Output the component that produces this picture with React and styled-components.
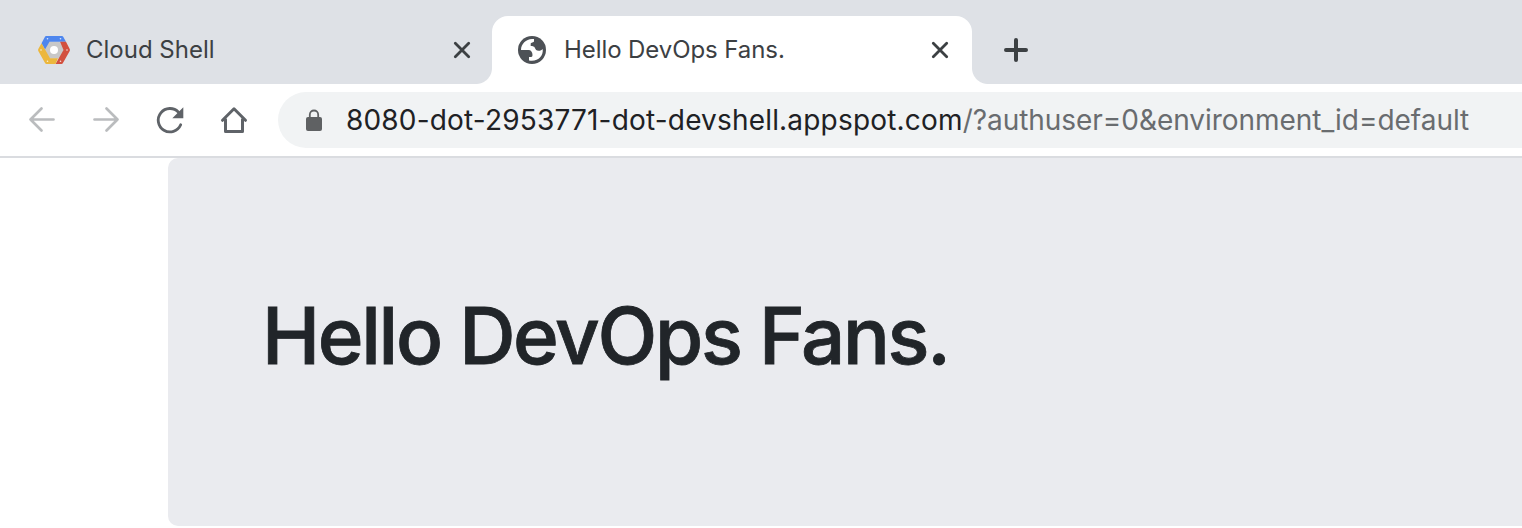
import React from "react";
import styled, { createGlobalStyle } from "styled-components";

const Global = createGlobalStyle`
  * { box-sizing: border-box; }
  body { margin: 0; background: #fff; font-family: Inter, "Liberation Sans", sans-serif; overflow: hidden; }
`;

const Browser = styled.div`
  width: 100%;
  height: 528px;
  overflow: hidden;
  display: flex;
  flex-direction: column;
`;

const TabStrip = styled.div`
  display: flex;
  height: 84px;
  flex: none;
  padding-top: 16px;
  background: #dee1e6;
`;

const Tab = styled.div`
  display: flex;
  align-items: center;
  width: ${(p) => (p.$active ? 480 : 492)}px;
  height: 68px;
  padding: 0 ${(p) => (p.$active ? 22 : 20)}px 0 ${(p) => (p.$active ? 26 : 38)}px;
  background: ${(p) => (p.$active ? "#fff" : "transparent")};
  border-radius: 16px 16px 0 0;
  position: relative;
  &::before, &::after {
    content: "";
    display: ${(p) => (p.$active ? "block" : "none")};
    position: absolute;
    bottom: 0;
    width: 16px;
    height: 16px;
  }
  &::before { left: -16px; background: radial-gradient(circle at 0 0, transparent 15.5px, #fff 16.5px); }
  &::after { right: -16px; background: radial-gradient(circle at 100% 0, transparent 15.5px, #fff 16.5px); }
`;

const TabTitle = styled.span`
  flex: 1;
  margin-left: ${(p) => p.$gap}px;
  font-size: 24px;
  line-height: 32px;
  letter-spacing: ${(p) => p.$track}px;
  color: #3c4043;
  white-space: nowrap;
`;

const Icon = styled.svg`
  display: block;
  flex: none;
  overflow: visible;
`;

const NewTab = styled.div`
  display: flex;
  align-items: center;
  margin-left: 32px;
`;

const Toolbar = styled.div`
  display: flex;
  align-items: center;
  height: 74px;
  flex: none;
  padding: 8px 0 8px 26px;
  border-bottom: 2px solid #dadce0;
`;

const NavButtons = styled.div`
  display: flex;
  gap: 32px;
  width: 252px;
`;

const AddressBar = styled.div`
  display: flex;
  align-items: center;
  flex: 1;
  height: 56px;
  padding-left: 27px;
  background: #f1f3f4;
  border-radius: 28px 0 0 28px;
`;

const Url = styled.span`
  margin-left: 23px;
  font-size: 28px;
  line-height: 36px;
  letter-spacing: 0.18px;
  white-space: nowrap;
  color: #202124;
`;

const Query = styled.span`
  color: #696c6f;
  letter-spacing: -0.04px;
`;

const Page = styled.main`
  flex: 1;
  padding-left: 168px;
`;

const Jumbotron = styled.section`
  display: flex;
  height: 368px;
  padding: 126px 94px;
  background: #eaebef;
  border-radius: 10px 0 0 10px;
`;

const Heading = styled.h1`
  margin: 0;
  font-size: 78px;
  font-weight: 500;
  line-height: 104px;
  letter-spacing: -2.33px;
  white-space: nowrap;
  color: #212529;
  -webkit-text-stroke: 0.8px #212529;
`;

const Close = () => (
  <Icon width="20" height="20" viewBox="0 0 20 20" stroke="#3c4043" strokeWidth="2.8" strokeLinecap="round">
    <path d="M3.3 3.3 16.7 16.7M16.7 3.3 3.3 16.7" />
  </Icon>
);

const CloudLogo = () => (
  <Icon width="32" height="28" viewBox="0 0 32 28">
    <path d="M10.500 5.700h11l4.700 8.300-4.700 8.300h-11L5.800 14z" fill="#c8c8c8" />
    <path d="M8 0h16q.8 0 1.200.7L28 5.700H11.500L7 13.500 3.500 7.300 7 .7Q7.400 0 8 0z" fill="#4e86ee" />
    <path d="M22 5.700h6l3.700 7.300q.5 1 0 2l-6.900 12.300q-.4.700-1.200.7H17.500l8-14z" fill="#d2503f" />
    <path d="M3.500 7.300 12 22.300h8L17.500 28H8.400q-.8 0-1.200-.7L.3 15q-.5-1 0-2z" fill="#ecb73d" />
    <circle cx="16" cy="14" r="4" fill="#fff" />
    <g fill="#fff" opacity=".8">
      <circle cx="9.500" cy="2.800" r=".8" /><circle cx="22.500" cy="2.800" r=".8" />
      <circle cx="3" cy="14" r=".8" /><circle cx="29" cy="14" r=".8" />
      <circle cx="9.500" cy="25.300" r=".8" /><circle cx="22.500" cy="25.300" r=".8" />
    </g>
  </Icon>
);

const Globe = () => (
  <Icon width="28" height="28" viewBox="0 0 28 28">
    <circle cx="14" cy="14" r="14" fill="#4d5156" />
    <path fill="#fff" d="M3 14C3 8 8 3 14 3h2v2.300c0 1.500-3.300 1-3.300 2.400V10c2 0 3.500.5 4 1.500.7 2 1.800 3.300 4 3.300 1.700 0 3-.8 4-1.800C25.700 20 19.500 26.300 11 24.500V21h2.200c.8 0 1.300-.9 1.300-2 0-3-1.500-5-4-5z" />
  </Icon>
);

export default function App() {
  return (
    <Browser>
      <Global />
      <TabStrip>
        <Tab><CloudLogo /><TabTitle $gap={16} $track={0}>Cloud Shell</TabTitle><Close /></Tab>
        <Tab $active><Globe /><TabTitle $gap={18} $track={-0.08}>Hello DevOps Fans.</TabTitle><Close /></Tab>
        <NewTab>
          <Icon width="24" height="24" viewBox="0 0 24 24" stroke="#3c4043" strokeWidth="4" strokeLinecap="round">
            <path d="M12 2v20M2 12h20" />
          </Icon>
        </NewTab>
      </TabStrip>
      <Toolbar>
        <NavButtons>
          <Icon width="32" height="32" viewBox="0 0 32 32" fill="none" stroke="#babcbe" strokeWidth="2.700" strokeLinecap="round" strokeLinejoin="round">
            <path d="M27.500 15.500H4.500M15.500 4.500l-11 11 11 11" />
          </Icon>
          <Icon width="32" height="32" viewBox="0 0 32 32" fill="none" stroke="#babcbe" strokeWidth="2.700" strokeLinecap="round" strokeLinejoin="round">
            <path d="M4.500 15.500h23M16.500 4.500l11 11-11 11" />
          </Icon>
          <Icon width="32" height="32" viewBox="0 0 32 32" fill="none" stroke="#5f6368" strokeWidth="2.800" strokeLinecap="round">
            <path d="M26.700 20.800A11.700 11.700 0 1 1 24.500 8.200" />
            <path d="M29.300 3.300v11H18.300z" fill="#5f6368" stroke="none" />
          </Icon>
          <Icon width="32" height="32" viewBox="0 0 32 32" fill="none" stroke="#5f6368" strokeWidth="3" strokeLinecap="round" strokeLinejoin="round">
            <path d="M4.500 16.300 16 4.800 27.500 16.300M7.500 15.500v12h17v-12" />
          </Icon>
        </NavButtons>
        <AddressBar>
          <Icon width="18" height="22" viewBox="0 0 18 22">
            <rect x="1" y="8" width="16" height="14" rx="2" fill="#5f6163" />
            <path d="M4.800 9.500V5.700a4.200 4.200 0 0 1 8.400 0v3.800" fill="none" stroke="#5f6163" strokeWidth="1.800" />
          </Icon>
          <Url>8080-dot-2953771-dot-devshell.appspot.com<Query>/?authuser=0&amp;environment_id=default</Query></Url>
        </AddressBar>
      </Toolbar>
      <Page>
        <Jumbotron><Heading>Hello DevOps Fans.</Heading></Jumbotron>
      </Page>
    </Browser>
  );
}
